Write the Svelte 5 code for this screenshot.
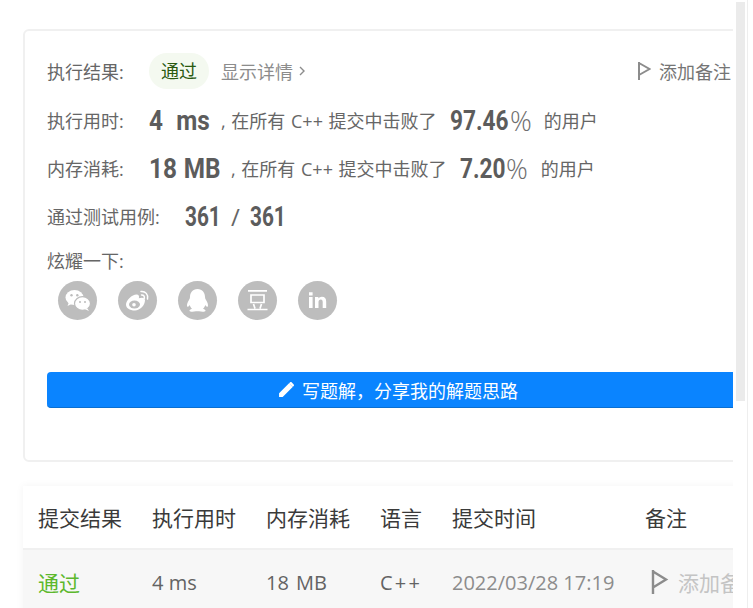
<script>
  const cols = ['提交结果', '执行用时', '内存消耗', '语言', '提交时间', '备注'];
</script>

<div class="page">
  <div class="scrollbar"><div class="thumb"></div></div>
  <div class="view">
    <section class="card">
      <div class="row r1">
        <span class="label">执行结果:</span>
        <span class="pill">通过</span>
        <span class="detail">显示详情</span>
        <svg class="chev" viewBox="0 0 6 10" width="6" height="10"><path d="M1 1l4 4-4 4" fill="none" stroke="#8c8c8c" stroke-width="1.4"/></svg>
        <span class="note">
          <svg viewBox="0 0 14 18" width="14" height="18"><path d="M2 0v18M2 1l10.500 6L2 13" fill="none" stroke="#8c8c8c" stroke-width="2"/></svg>
          添加备注
        </span>
      </div>
      <div class="row r2">
        <span class="label">执行用时:</span>
        <span class="slot s-ms"><b class="num unit">4 ms</b></span>
        <span class="txt">, 在所有 C++ 提交中击败了</span>
        <span class="slot s-p1"><b class="num wide">97.46</b></span><i class="pc">%</i>
        <span class="txt end1">的用户</span>
      </div>
      <div class="row r3">
        <span class="label">内存消耗:</span>
        <span class="slot s-mb"><b class="num unit">18 MB</b></span>
        <span class="txt">, 在所有 C++ 提交中击败了</span>
        <span class="slot s-p2"><b class="num wide">7.20</b></span><i class="pc">%</i>
        <span class="txt end2">的用户</span>
      </div>
      <div class="row r4">
        <span class="label">通过测试用例:</span>
        <span class="slot s-c"><b class="num">361</b></span>
        <span class="slash">/</span>
        <span class="slot s-c"><b class="num">361</b></span>
      </div>
      <div class="share-label">炫耀一下:</div>
      <div class="share">
        <span class="ico"><svg viewBox="0 0 39 39" width="39" height="39">
          <ellipse cx="16.500" cy="16.500" rx="9" ry="7.500" fill="#fff"/><path d="M11 21l-1.500 4 5-2.500z" fill="#fff"/>
          <ellipse cx="24.500" cy="22.500" rx="8" ry="6.800" fill="#fff" stroke="#bdbdbd" stroke-width="1.200"/><path d="M29 27l2 3-4.500-2z" fill="#fff"/>
          <circle cx="13.500" cy="14.200" r="1.200" fill="#bdbdbd"/><circle cx="19.300" cy="14.200" r="1.200" fill="#bdbdbd"/><circle cx="22" cy="21" r="1" fill="#bdbdbd"/><circle cx="27" cy="21" r="1" fill="#bdbdbd"/>
        </svg></span>
        <span class="ico"><svg viewBox="0 0 39 39" width="39" height="39">
          <path d="M17 29.500c-5.500 0-9-2.500-9-6 0-4 6-10 10.500-10 2.500 0 3 2 2.300 3.800 3-1 6.200-.8 6.200 2 0 5-5 10.200-10 10.200z" fill="#fff"/>
          <ellipse cx="16.500" cy="23.500" rx="5.500" ry="4" fill="#bdbdbd"/><circle cx="16" cy="23.800" r="1.800" fill="#fff"/>
          <path d="M23 10.500c4.500-.5 7.500 3 6.500 7.500M23.500 14c2-.2 3.200 1.300 2.800 3.300" fill="none" stroke="#fff" stroke-width="1.500" stroke-linecap="round"/>
        </svg></span>
        <span class="ico"><svg viewBox="0 0 39 39" width="39" height="39">
          <path d="M19.500 8c-5 0-7.500 4-7.500 8 0 1-.3 2-1 3-1.500 2.200-2.500 5-1.800 6.500.5.800 1.700-.2 2.500-1.500.4 1.500 1.200 2.800 2.300 3.700-1.600.5-2.800 1.300-2.500 2.300.4 1 4 1 6.500.3.500-.1 2.500-.1 3 0 2.500.7 6.100.7 6.500-.3.300-1-.9-1.800-2.500-2.300 1.100-.9 1.900-2.200 2.300-3.700.8 1.300 2 2.300 2.500 1.500.7-1.500-.3-4.300-1.800-6.500-.7-1-1-2-1-3 0-4-2.500-8-7.500-8z" fill="#fff"/>
        </svg></span>
        <span class="ico"><svg viewBox="0 0 39 39" width="39" height="39">
          <path d="M10 9.800h19M13 14h13v7.500H13zM15.500 23l1.500 4.500M23.500 23L22 27.500M9.500 28.500h20" fill="none" stroke="#fff" stroke-width="1.700"/>
        </svg></span>
        <span class="ico"><svg viewBox="0 0 39 39" width="39" height="39">
          <path d="M11 16h3.600v11H11zM11 11.200h3.600v3.200H11zM17 16h3.400v1.600c.8-1.200 2-1.900 3.500-1.900 2.900 0 4.300 1.800 4.300 5V27h-3.500v-5.900c0-1.700-.6-2.600-1.900-2.600-1.400 0-2.300 1-2.300 2.800V27H17z" fill="#fff"/>
        </svg></span>
      </div>
      <button class="solve">
        <svg viewBox="0 0 16 16" width="17" height="17"><path d="M1 15v-3.400L10.400 2.200l3.400 3.400L4.400 15zM11.400 1.200c.4-.4 1-.4 1.400 0l2 2c.4.4.4 1 0 1.400l-.9.9-3.400-3.400z" fill="#fff"/></svg>
        写题解，分享我的解题思路
      </button>
    </section>

    <section class="table">
      <div class="tr head">
        {#each cols as c}<span>{c}</span>{/each}
      </div>
      <div class="tr body">
        <span class="ok">通过</span>
        <span>4 ms</span>
        <span class="mem">18 MB</span>
        <span class="lang">C++</span>
        <span class="time">2022/03/28 17:19</span>
        <span class="add">
          <svg viewBox="0 0 18 24" width="18" height="24"><path d="M2 0v24M2 1.500l13 8-13 8" fill="none" stroke="#8c8c8c" stroke-width="2.400"/></svg>
          <em>添加备注</em>
        </span>
      </div>
    </section>
  </div>
</div>

<style>
  :global(body) {
    margin: 0;
    background: #fff;
    overflow: hidden;
  }
  .page {
    height: 608px;
    width: 753px;
    overflow: hidden;
    position: relative;
    font-family: "Open Sans", "Noto Sans CJK SC", sans-serif;
    color: #666;
    font-size: 18px;
    box-sizing: border-box;
  }
  .page::after {
    content: "";
    position: absolute;
    left: 747px;
    top: 0;
    bottom: 0;
    width: 1px;
    background: #eeeeee;
  }
  .scrollbar {
    position: absolute;
    left: 736px;
    top: 2px;
    width: 9px;
    height: 399px;
    background: #ebebeb;
  }
  .view {
    width: 733px;
    height: 608px;
    overflow: hidden;
    padding: 29px 0 0 23px;
    box-sizing: border-box;
  }
  .card {
    width: 749px;
    height: 433px;
    box-sizing: border-box;
    border: 2px solid #f0f0f0;
    border-radius: 6px;
    padding: 22px 22px 0 22px;
    background: #fff;
  }
  .row {
    display: flex;
    align-items: center;
    height: 36px;
    white-space: nowrap;
  }
  .r2 { margin-top: 13px; }
  .r3 { margin-top: 12px; }
  .r4 { margin-top: 12px; }
  .label { width: 102px; flex: none; }
  .r4 .label { width: 138px; }
  .pill {
    width: 60px;
    height: 36px;
    line-height: 36px;
    border-radius: 18px;
    text-align: center;
    background: #f4f9f0;
    color: #2a5a10;
  }
  .detail { color: #8c8c8c; margin-left: 12px; }
  .chev { margin-left: 6px; }
  .note {
    margin-left: auto;
    margin-right: 17px;
    display: flex;
    align-items: center;
    gap: 8px;
    color: #757575;
  }
  .slot { display: block; flex: none; height: 36px; line-height: 38px; }
  .num {
    display: inline-block;
    font-family: Roboto, sans-serif;
    font-weight: 700;
    font-size: 27px;
    color: #5c5c5c;
    transform: scaleX(0.77);
    transform-origin: left center;
  }
  .wide { transform: scaleX(0.84); }
  .unit { transform: scaleX(0.9); }
  .pc {
    font-style: normal;
    font-size: 27px;
    font-weight: 300;
    font-family: "Open Sans", sans-serif;
    color: #6e6e6e;
    flex: none;
  }
  .s-ms { width: 72px; word-spacing: 8px; }
  .s-mb { width: 82px; word-spacing: 1px; }
  .s-p1 { width: 60px; margin-left: 11px; }
  .s-p2 { width: 46px; margin-left: 11px; }
  .s-c { width: 35px; }
  .slash { margin: 0 11px; font-size: 24px; width: 8px; text-align: center; flex: none; }
  .txt { flex: none; width: 218px; word-spacing: 1px; }
  .end1, .end2 { width: auto; }
  .end1 { margin-left: 12px; }
  .end2 { margin-left: 13px; }
  .share-label { margin-top: 14px; line-height: 26px; height: 26px; }
  .share {
    display: flex;
    gap: 21px;
    margin-top: 7px;
    padding-left: 11px;
  }
  .ico {
    width: 39px;
    height: 39px;
    border-radius: 50%;
    background: #bdbdbd;
    display: block;
  }
  .ico svg { display: block; }
  .solve {
    display: flex;
    align-items: center;
    justify-content: center;
    gap: 7px;
    width: 702px;
    height: 36px;
    margin-top: 52px;
    border: 0;
    border-bottom: 1px solid #0a6fd1;
    border-radius: 4px;
    background: #0a84ff;
    color: #fff;
    font: inherit;
    padding: 0;
  }
  .table {
    margin-top: 24px;
    width: 760px;
    box-shadow: 0 0 8px rgba(0, 0, 0, 0.05);
    background: #fff;
  }
  .tr {
    display: grid;
    grid-template-columns: 114px 114px 114px 72px 193px 1fr;
    padding-left: 15px;
    align-items: center;
    white-space: nowrap;
  }
  .head {
    height: 62px;
    font-size: 21px;
    color: #3a3a3a;
    border-bottom: 2px solid #f0f0f0;
  }
  .body {
    height: 64px;
    padding-bottom: 8px;
    background: #f7f7f7;
    font-size: 20px;
    color: #636363;
  }
  .ok { color: #5cb82d; font-size: 21px; }
  .mem { word-spacing: 2px; }
  .lang { letter-spacing: 2.200px; }
  .time { color: #8c8c8c; }
  .add { display: flex; align-items: center; gap: 9px; margin-left: 6px; overflow: hidden; }
  .add em { font-style: normal; color: #c4c4c4; font-size: 21px; }
</style>
